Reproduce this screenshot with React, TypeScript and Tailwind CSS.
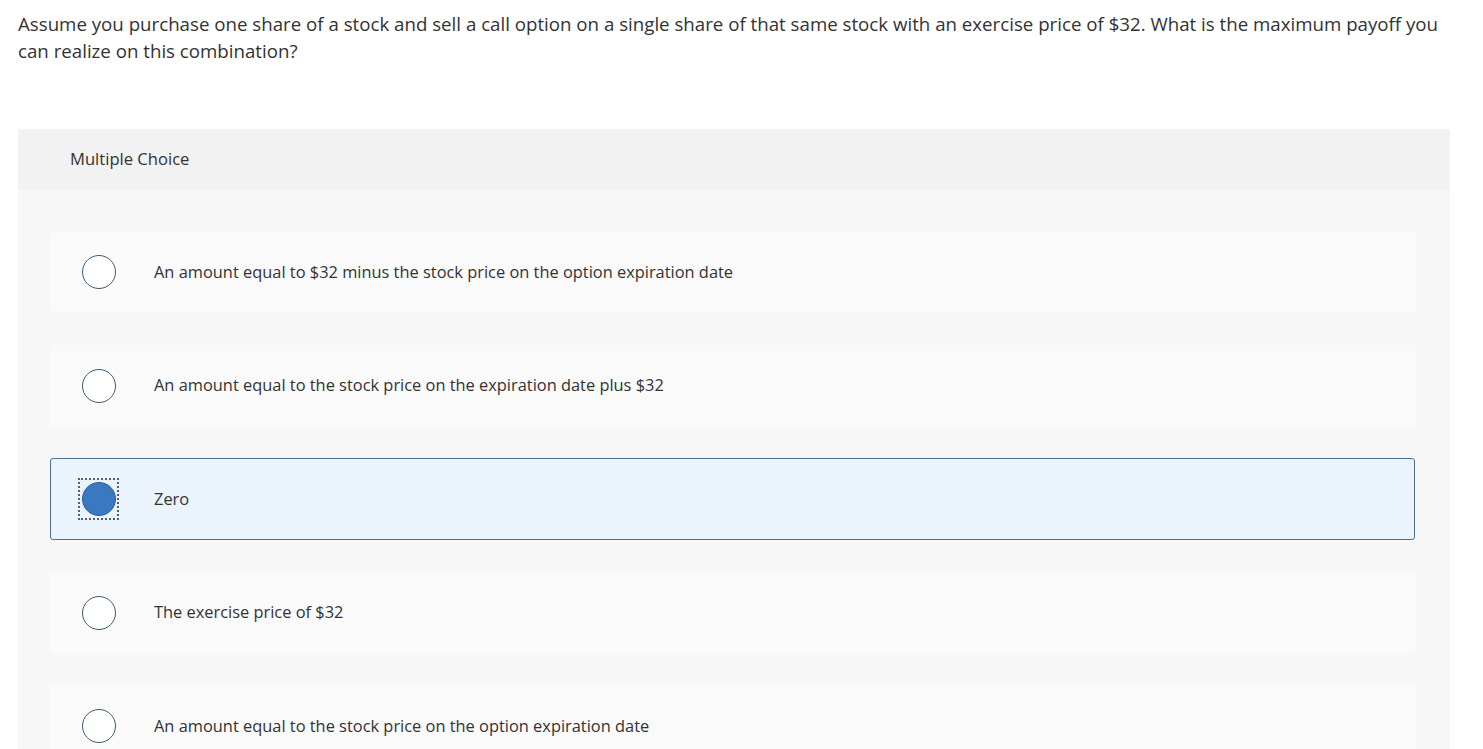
const options = [
  { text: "An amount equal to $32 minus the stock price on the option expiration date", selected: false },
  { text: "An amount equal to the stock price on the expiration date plus $32", selected: false },
  { text: "Zero", selected: true },
  { text: "The exercise price of $32", selected: false },
  { text: "An amount equal to the stock price on the option expiration date", selected: false },
];

function Radio({ selected }: { selected: boolean }) {
  if (selected) {
    return (
      <div className="flex h-[42px] w-[41px] items-center justify-center border-2 border-dotted border-[#4a6078]">
        <div className="h-[34px] w-[34px] rounded-full border border-[#2c5f9c] bg-[#3a78c0]" />
      </div>
    );
  }
  return (
    <div className="flex h-[42px] w-[41px] items-center justify-center">
      <div className="h-[34px] w-[34px] rounded-full border-[1.5px] border-[#3d5a73] bg-white" />
    </div>
  );
}

export default function App() {
  return (
    <div className="min-h-screen bg-white font-['Open_Sans',sans-serif] text-[#333]">
      <div className="pl-[18px] pr-[33px]">
        <p className="pt-[10px] text-[18.7px] leading-[27px]">
          Assume you purchase one share of a stock and sell a call option on a single share of that same stock with an exercise price of $32. What is the maximum payoff you can realize on this combination?
        </p>
        <div className="mt-[65px] bg-[#f7f7f7]">
          <div className="flex h-[61px] items-center bg-[#f2f2f2] pl-[52px] text-[16.6px]">
            Multiple Choice
          </div>
          <div className="flex flex-col gap-[31.5px] pb-[40px] pl-[32px] pr-[35px] pt-[41px]">
            {options.map((o, i) => (
              <div
                key={i}
                className={
                  o.selected
                    ? "flex h-[82px] items-center rounded-[3px] border border-[#4f6f8f] bg-[#ebf3fc] pl-[27px]"
                    : "flex h-[82px] items-center rounded-[3px] border border-transparent bg-[#fafafa] pl-[27px]"
                }
              >
                <Radio selected={o.selected} />
                <span className="ml-[35px] text-[16.4px]">{o.text}</span>
              </div>
            ))}
          </div>
        </div>
      </div>
    </div>
  );
}
